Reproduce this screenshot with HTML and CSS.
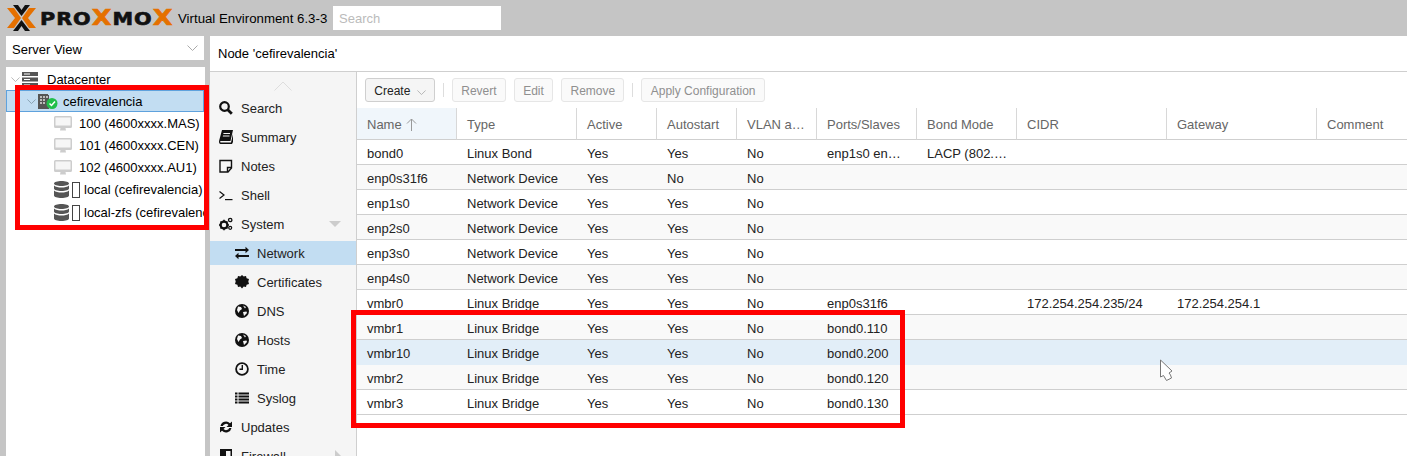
FILE: index.html
```html
<!DOCTYPE html>
<html>
<head>
    <meta charset="UTF-8">
    <title>Proxmox Virtual Environment</title>
    <link rel="stylesheet" href="styles.css">
</head>
<body>
<svg class="defs" width="0" height="0">
    <symbol id="monitor" viewBox="0 0 18 15">
        <path d="M1.5 0h15A1.5 1.5 0 0 1 18 1.500v9a1.500 1.500 0 0 1-1.500 1.500H11.500l.5 2.500H6l.5-2.500H1.500A1.500 1.500 0 0 1 0 10.500v-9A1.500 1.500 0 0 1 1.500 0z" fill="#cdcdcd"/>
        <path d="M1.500 1.500h15v8h-15z" fill="#f6f6f6"/>
    </symbol>
    <symbol id="storage" viewBox="0 0 15 17">
        <path d="M7.500 0C11.600 0 15 1 15 2.500S11.600 5 7.500 5 0 4 0 2.500 3.400 0 7.500 0zM0 4.500C1.500 6 4.500 6.500 7.500 6.500s6-.5 7.500-2v3C15 9 11.600 10 7.500 10S0 9 0 7.500zM0 9.500C1.500 11 4.500 11.500 7.500 11.500s6-.5 7.500-2v5C15 16 11.600 17 7.500 17S0 16 0 14.500z" fill="#555"/>
    </symbol>
    <symbol id="globe" viewBox="0 0 14 14">
        <circle cx="7" cy="7" r="7" fill="#111"/>
        <path d="M3 2.500l3 .5 1 2-2 1.500-1.500 2.500L2 6zM8 1.500l3 1.500-1 1.500zM8 8l3.500-.5.500 1.500-3 3z" fill="#f5f5f5"/>
    </symbol>
</svg>

<header class="topbar">
    <div class="logo">
        <svg class="logo-mark" width="29" height="26" viewBox="0 0 29 26">
            <path d="M0 3h7l7 10-7 10H0l8-10zM29 3h-7l-7 10 7 10h7l-8-10z" fill="#e57000"/>
            <path d="M6 0h5l3.500 5L18 0h5l-8.500 11zM6 26h5l3.500-5 3.500 5h5l-8.500-11z" fill="#111"/>
        </svg>
        <span class="logo-text">PRO<span class="logo-x">X</span>MO<span class="logo-x">X</span></span>
    </div>
    <span class="version">Virtual Environment 6.3-3</span>
    <input class="global-search" type="text" placeholder="Search">
</header>

<div class="workspace">
    <aside class="sidebar">
        <div class="view-select">
            <span>Server View</span>
            <svg class="chevron" width="11" height="6" viewBox="0 0 11 6"><path d="M.5.500l5 5 5-5" /></svg>
        </div>
        <div class="tree">
            <div class="tree-row level-0">
                <svg class="chevron twist" width="9" height="5" viewBox="0 0 11 6"><path d="M.5.500l5 5 5-5" /></svg>
                <svg class="tree-icon" width="16" height="15" viewBox="0 0 16 15"><path d="M0 0h16v4H0zM0 5.500h16v4H0zM0 11h16v4H0z" fill="#555"/><path d="M2 1.500h6v1H2zM2 7h6v1H2zM2 12.500h6v1H2z" fill="#fff"/></svg>
                <span>Datacenter</span>
            </div>
            <div class="tree-row level-1 selected">
                <svg class="chevron twist" width="9" height="5" viewBox="0 0 11 6"><path d="M.5.500l5 5 5-5" /></svg>
                <svg class="tree-icon" width="20" height="16" viewBox="0 0 20 16">
                    <path d="M0 1h10v1h1v14H0z" fill="#555"/>
                    <path d="M2 3h2v2H2zM5 3h2v2H5zM8 3h2v2H8zM2 6h2v2H2zM5 6h2v2H5zM2 9h2v2H2zM5 9h2v2H5z" fill="#bbb"/>
                    <circle cx="14" cy="10.500" r="5.500" fill="#21bf4b"/>
                    <path d="M11.500 10.500l2 2 3.500-4" fill="none" stroke="#fff" stroke-width="1.500"/>
                </svg>
                <span>cefirevalencia</span>
            </div>
            <div class="tree-row level-2"><svg class="tree-icon" width="18" height="15"><use href="#monitor"/></svg><span>100 (4600xxxx.MAS)</span></div>
            <div class="tree-row level-2"><svg class="tree-icon" width="18" height="15"><use href="#monitor"/></svg><span>101 (4600xxxx.CEN)</span></div>
            <div class="tree-row level-2"><svg class="tree-icon" width="18" height="15"><use href="#monitor"/></svg><span>102 (4600xxxx.AU1)</span></div>
            <div class="tree-row level-2 store"><svg class="store-icon" width="15" height="17"><use href="#storage"/></svg><i class="missing-glyph"></i><span>local (cefirevalencia)</span></div>
            <div class="tree-row level-2 store"><svg class="store-icon" width="15" height="17"><use href="#storage"/></svg><i class="missing-glyph"></i><span>local-zfs (cefirevalencia)</span></div>
        </div>
    </aside>

    <main class="panel">
        <div class="panel-title">Node 'cefirevalencia'</div>
        <div class="panel-body">
            <nav class="side-nav">
                <div class="nav-scroll"><svg width="18" height="10" viewBox="0 0 18 10"><path d="M.5 9.500L9 1l8.500 8.500" fill="none" stroke="#ddd"/></svg></div>
                <a class="nav-item">
                    <svg width="14" height="14" viewBox="0 0 14 14"><circle cx="5.500" cy="5.500" r="4.300" fill="none" stroke="#111" stroke-width="2.200"/><path d="M8.500 8.500l4.300 4.300" stroke="#111" stroke-width="2.800"/></svg>
                    Search</a>
                <a class="nav-item">
                    <svg width="14" height="14" viewBox="0 0 14 14"><path d="M3 0h11l-2.500 11H1.800C1 11 .8 12.500 1.800 12.500H12L14 4v8l-1 2H1.500C0 14-.3 12 .3 10z" fill="#111"/><path d="M4.500 3h6.500v1H4.300zM4 5.500h6.500v1H3.800z" fill="#f5f5f5"/></svg>
                    Summary</a>
                <a class="nav-item">
                    <svg width="14" height="14" viewBox="0 0 14 14"><path d="M1 1.500h11.500v7.500L9 13H1z" fill="none" stroke="#111" stroke-width="1.400"/><path d="M12.500 8.500H8.500V13" fill="none" stroke="#111" stroke-width="1.400"/></svg>
                    Notes</a>
                <a class="nav-item">
                    <svg width="14" height="14" viewBox="0 0 14 14"><path d="M.5 3.500L5 7 .5 10.500" fill="none" stroke="#111" stroke-width="1.200"/><path d="M6 11h7.500v1.200H6z" fill="#111"/></svg>
                    Shell</a>
                <a class="nav-item">
                    <svg width="14" height="14" viewBox="0 0 14 14"><circle cx="5" cy="8" r="3.400" fill="none" stroke="#111" stroke-width="2.200"/><path d="M5 2.800v1.500M5 11.700v1.500M0 8h1.500M8.500 8H10M1.500 4.500l1 1M7.500 10.500l1 1M1.500 11.500l1-1M7.500 5.500l1-1" stroke="#111" stroke-width="1.600"/><circle cx="11.200" cy="3" r="1.700" fill="none" stroke="#111" stroke-width="1.300"/><circle cx="11.200" cy="10.800" r="1.500" fill="none" stroke="#111" stroke-width="1.200"/></svg>
                    System
                    <svg class="nav-arrow" width="12" height="6" viewBox="0 0 12 6"><path d="M0 0h12L6 6z" fill="#ccc"/></svg></a>
                <a class="nav-item sub selected">
                    <svg width="14" height="14" viewBox="0 0 14 14"><path d="M0 3h10.500V.8L14 4l-3.500 3.200V5H0zM14 9H3.500V6.800L0 10l3.500 3.200V11H14z" fill="#111"/></svg>
                    Network</a>
                <a class="nav-item sub">
                    <svg width="14" height="14" viewBox="0 0 14 14"><path d="M7 0l1.700 1.500L11 .9l.6 2.400 2.400.7-.7 2.500L14 9l-2.400.7-.6 2.400-2.300-.6L7 13.500l-1.700-2-2.300.6-.6-2.400L0 9l.7-2.500L0 4l2.400-.7L3 .9l2.300.6z" fill="#111"/></svg>
                    Certificates</a>
                <a class="nav-item sub"><svg width="14" height="14"><use href="#globe"/></svg>DNS</a>
                <a class="nav-item sub"><svg width="14" height="14"><use href="#globe"/></svg>Hosts</a>
                <a class="nav-item sub">
                    <svg width="14" height="14" viewBox="0 0 14 14"><circle cx="7" cy="7" r="5.900" fill="none" stroke="#111" stroke-width="1.800"/><path d="M7.300 3v4.300H4.500" fill="none" stroke="#111" stroke-width="1.400"/></svg>
                    Time</a>
                <a class="nav-item sub">
                    <svg width="14" height="14" viewBox="0 0 14 14"><path d="M0 1.500h2.500v2H0zM3.500 1.500H14v2H3.500zM0 4.500h2.500v2H0zM3.500 4.500H14v2H3.500zM0 7.500h2.500v2H0zM3.500 7.500H14v2H3.500zM0 10.500h2.500v2H0zM3.500 10.500H14v2H3.500z" fill="#111"/></svg>
                    Syslog</a>
                <a class="nav-item">
                    <svg width="14" height="14" viewBox="0 0 14 14"><path d="M1.500 6A5.600 5.600 0 0 1 11 3.200L13 1.500V7H7.500l2-2A3.400 3.400 0 0 0 3.800 6zM12.500 8A5.600 5.600 0 0 1 3 10.800L1 12.500V7h5.500l-2 2a3.400 3.400 0 0 0 5.700-1z" fill="#111"/></svg>
                    Updates</a>
                <a class="nav-item">
                    <svg width="14" height="14" viewBox="0 0 14 14"><path d="M1 0h12v8c0 3-3 5-6 6-3-1-6-3-6-6z" fill="#111"/><path d="M7 2h4.500v6H7z" fill="#f5f5f5"/></svg>
                    Firewall
                    <svg class="nav-arrow" width="6" height="12" viewBox="0 0 6 12"><path d="M0 0l6 6-6 6z" fill="#ccc"/></svg></a>
            </nav>

            <section class="content">
                <div class="toolbar">
                    <button class="btn">Create <svg class="chevron" width="9" height="5" viewBox="0 0 11 6"><path d="M.5.500l5 5 5-5" /></svg></button>
                    <span class="tb-sep"></span>
                    <button class="btn off">Revert</button>
                    <button class="btn off">Edit</button>
                    <button class="btn off">Remove</button>
                    <span class="tb-sep"></span>
                    <button class="btn off">Apply Configuration</button>
                </div>
                <table class="grid">
                    <colgroup>
                        <col class="w100"><col class="w120"><col class="w80"><col class="w80"><col class="w80">
                        <col class="w100"><col class="w100"><col class="w150"><col class="w150"><col class="w100">
                    </colgroup>
                    <thead>
                        <tr>
                            <th class="sorted">Name <svg class="sort-arrow" width="11" height="13" viewBox="0 0 11 13"><path d="M5.500 13V1M1 5.500L5.500 1 10 5.500" fill="none" stroke="#999"/></svg></th>
                            <th>Type</th><th>Active</th><th>Autostart</th><th>VLAN aware</th>
                            <th>Ports/Slaves</th><th>Bond Mode</th><th>CIDR</th><th>Gateway</th><th>Comment</th>
                        </tr>
                    </thead>
                    <tbody>
                        <tr><td>bond0</td><td>Linux Bond</td><td>Yes</td><td>Yes</td><td>No</td><td>enp1s0 enp2s0 enp3s0</td><td>LACP (802.3ad)</td><td></td><td></td><td></td></tr>
                        <tr><td>enp0s31f6</td><td>Network Device</td><td>Yes</td><td>No</td><td>No</td><td></td><td></td><td></td><td></td><td></td></tr>
                        <tr><td>enp1s0</td><td>Network Device</td><td>Yes</td><td>Yes</td><td>No</td><td></td><td></td><td></td><td></td><td></td></tr>
                        <tr><td>enp2s0</td><td>Network Device</td><td>Yes</td><td>Yes</td><td>No</td><td></td><td></td><td></td><td></td><td></td></tr>
                        <tr><td>enp3s0</td><td>Network Device</td><td>Yes</td><td>Yes</td><td>No</td><td></td><td></td><td></td><td></td><td></td></tr>
                        <tr><td>enp4s0</td><td>Network Device</td><td>Yes</td><td>Yes</td><td>No</td><td></td><td></td><td></td><td></td><td></td></tr>
                        <tr><td>vmbr0</td><td>Linux Bridge</td><td>Yes</td><td>Yes</td><td>No</td><td>enp0s31f6</td><td></td><td>172.254.254.235/24</td><td>172.254.254.1</td><td></td></tr>
                        <tr><td>vmbr1</td><td>Linux Bridge</td><td>Yes</td><td>Yes</td><td>No</td><td>bond0.110</td><td></td><td></td><td></td><td></td></tr>
                        <tr class="hover"><td>vmbr10</td><td>Linux Bridge</td><td>Yes</td><td>Yes</td><td>No</td><td>bond0.200</td><td></td><td></td><td></td><td></td></tr>
                        <tr><td>vmbr2</td><td>Linux Bridge</td><td>Yes</td><td>Yes</td><td>No</td><td>bond0.120</td><td></td><td></td><td></td><td></td></tr>
                        <tr><td>vmbr3</td><td>Linux Bridge</td><td>Yes</td><td>Yes</td><td>No</td><td>bond0.130</td><td></td><td></td><td></td><td></td></tr>
                    </tbody>
                </table>
            </section>
        </div>
    </main>
</div>

<!-- annotations drawn over the screenshot -->
<div class="mark mark-tree"></div>
<div class="mark mark-rows"></div>
<svg class="pointer" width="15" height="23" viewBox="0 0 15 23"><path d="M1.500 1v17l3-1.500 3 5 5-2.500-1-3-1.500-2 3-2z" fill="#fff" stroke="#777" stroke-linejoin="round"/></svg>
</body>
</html>
```

FILE: styles.css
```css
html, body {
    margin: 0;
    height: 456px;
    overflow: hidden;
}

body {
    position: relative;
    background-color: #c5c5c5;
    color: #000;
    font-family: "Liberation Sans", Arial, sans-serif;
    font-size: 13px;
}

.defs {
    position: absolute;
}

/* top bar */
.topbar {
    display: flex;
    align-items: center;
    height: 36px;
    padding-left: 7px;
    box-sizing: border-box;
}

.logo {
    display: flex;
    align-items: center;
    width: 171px;
    flex: none;
}

.logo-mark {
    flex: none;
}

.logo-text {
    display: inline-block;
    margin-left: 4px;
    font-family: "DejaVu Sans", sans-serif;
    font-size: 17px;
    line-height: 20px;
    font-weight: bold;
    letter-spacing: 0.8px;
    color: #111;
    white-space: nowrap;
    -webkit-text-stroke: 0.6px #111;
    transform: scaleX(1.22);
    transform-origin: left center;
}

.logo-x {
    font-size: 21px;
    color: #e57000;
    -webkit-text-stroke: 0.6px #e57000;
}

.version {
    width: 155px;
    flex: none;
    font-size: 13.25px;
    white-space: nowrap;
}

.global-search {
    width: 168px;
    height: 24px;
    box-sizing: border-box;
    padding: 0 6px;
    border: none;
    background: #fff;
    font: 13px "Liberation Sans", Arial, sans-serif;
}

.global-search::placeholder {
    color: #bbb;
}

.workspace {
    display: flex;
    height: 420px;
    padding-left: 6px;
}

/* left column */
.sidebar {
    width: 199px;
    margin-right: 5px;
    flex: none;
}

.view-select {
    display: flex;
    align-items: center;
    justify-content: space-between;
    width: 198px;
    height: 24px;
    box-sizing: border-box;
    padding: 0 6px;
    background: #fff;
}

.view-select span {
    padding-top: 2px;
}

.chevron path {
    fill: none;
    stroke: #aaa;
}

.selected .chevron path {
    stroke: #7f97a8;
}

.tree {
    height: 389px;
    margin-top: 7px;
    padding-top: 1px;
    box-sizing: border-box;
    background: #fff;
    overflow: hidden;
}

.tree-row {
    display: flex;
    align-items: center;
    height: 22px;
    box-sizing: border-box;
    white-space: nowrap;
}

.tree-row.store {
    height: 23px;
}

.tree-row.selected {
    background: #c2ddf2;
    border: 1px solid #5fa2dd;
    width: 198px;
}

.level-0 {
    padding-left: 5px;
}

.level-1 {
    padding-left: 20px;
}

.level-2 {
    padding-left: 48px;
}

.twist {
    margin-right: 2px;
}

.tree-icon {
    flex: none;
    margin-right: 7px;
}

.level-0 .tree-icon {
    margin-right: 9px;
}

.level-1 .tree-icon {
    margin-right: 5px;
}

.store-icon {
    flex: none;
    margin-right: 3px;
}

.missing-glyph {
    flex: none;
    width: 6px;
    height: 14px;
    margin-right: 4px;
    border: 1px solid #444;
}

/* main panel */
.panel {
    flex: 1;
    min-width: 0;
    display: flex;
    flex-direction: column;
    background: #fff;
}

.panel-title {
    height: 36px;
    box-sizing: border-box;
    padding: 10px 8px 0;
    border-bottom: 1px solid #cfcfcf;
}

.panel-body {
    flex: 1;
    display: flex;
    min-height: 0;
}

.side-nav {
    width: 147px;
    flex: none;
    box-sizing: border-box;
    background: #f5f5f5;
    border-right: 1px solid #cfcfcf;
    overflow: hidden;
}

.nav-scroll {
    height: 24px;
    padding-top: 7px;
    box-sizing: border-box;
    text-align: center;
}

.nav-item {
    display: flex;
    align-items: center;
    gap: 8px;
    height: 24px;
    margin-bottom: 5px;
    padding-left: 9px;
    color: #222;
}

.nav-item svg {
    flex: none;
}

.nav-item.sub {
    padding-left: 25px;
}

.nav-item.selected {
    background: #c2ddf2;
}

.nav-arrow {
    margin-left: auto;
    margin-right: 15px;
}

/* network grid */
.content {
    flex: 1;
    min-width: 0;
    overflow: hidden;
}

.toolbar {
    display: flex;
    align-items: center;
    gap: 8px;
    height: 36px;
    padding-left: 8px;
    box-sizing: border-box;
}

.btn {
    height: 24px;
    padding: 1px 8.3px 0;
    box-sizing: border-box;
    border: 1px solid #cfcfcf;
    border-radius: 3px;
    background: #f5f5f5;
    color: #222;
    font: 12px "Liberation Sans", Arial, sans-serif;
}

.btn .chevron {
    margin-left: 3px;
}

.btn.off {
    border-color: #e6e6e6;
    background: #fafafa;
    color: #8f8f8f;
}

.tb-sep {
    width: 1px;
    height: 14px;
    background: #ddd;
}

.grid {
    table-layout: fixed;
    width: 1060px;
    border-collapse: separate;
    border-spacing: 0;
}

.w80 { width: 80px; }
.w100 { width: 100px; }
.w120 { width: 120px; }
.w150 { width: 150px; }

.grid th {
    height: 32px;
    box-sizing: border-box;
    padding: 2px 10px 0;
    border-bottom: 1px solid #cfcfcf;
    border-right: 1px solid #d8d8d8;
    color: #666;
    font-weight: normal;
    text-align: left;
    white-space: nowrap;
    overflow: hidden;
    text-overflow: ellipsis;
}

.grid th.sorted {
    background: #f0f6fb;
}

.sort-arrow {
    margin-left: 1px;
    vertical-align: -2px;
}

.grid td {
    height: 25px;
    box-sizing: border-box;
    padding: 2px 10px 0;
    border-bottom: 1px solid #cfcfcf;
    color: #222;
    white-space: nowrap;
    overflow: hidden;
    text-overflow: ellipsis;
}

.grid tbody tr:nth-child(even) td {
    background: #f9f9f9;
}

.grid tbody tr.hover td {
    background: #e2eef8;
    border-bottom-color: #e2eef8;
}

/* red boxes and mouse pointer on top of the screenshot */
.mark {
    position: absolute;
    box-sizing: border-box;
    border: 5px solid #f00;
}

.mark-tree {
    left: 15px;
    top: 85px;
    width: 194px;
    height: 145px;
}

.mark-rows {
    left: 351px;
    top: 310px;
    width: 554px;
    height: 118px;
}

.pointer {
    position: absolute;
    left: 1159px;
    top: 359px;
}
```
